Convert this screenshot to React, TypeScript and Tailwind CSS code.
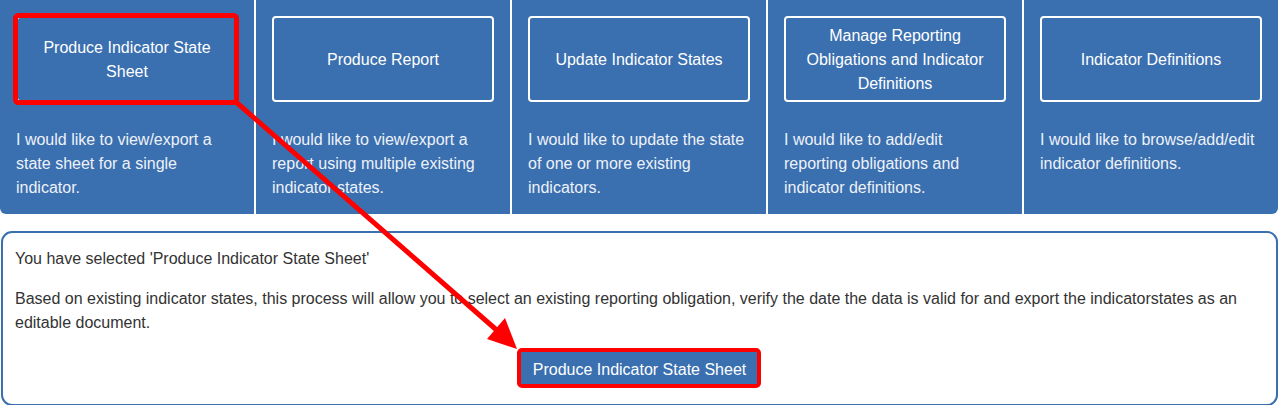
import React from "react";

const tasks = [
  {
    title: "Produce Indicator State Sheet",
    desc: "I would like to view/export a state sheet for a single indicator.",
  },
  {
    title: "Produce Report",
    desc: "I would like to view/export a report using multiple existing indicator states.",
  },
  {
    title: "Update Indicator States",
    desc: "I would like to update the state of one or more existing indicators.",
  },
  {
    title: "Manage Reporting Obligations and Indicator Definitions",
    desc: "I would like to add/edit reporting obligations and indicator definitions.",
  },
  {
    title: "Indicator Definitions",
    desc: "I would like to browse/add/edit indicator definitions.",
  },
];

function Annotations() {
  // red callout drawn over the screenshot
  return (
    <svg
      className="pointer-events-none absolute left-0 top-0"
      width={1278}
      height={405}
      viewBox="0 0 1278 405"
    >
      <rect x={15.5} y={15.5} width={221} height={87} rx={3} fill="none" stroke="#ff0000" strokeWidth={5} />
      <line x1={236} y1={102} x2={500} y2={333} stroke="#ff0000" strokeWidth={5} />
      <polygon points="517,349 487,339 505,318" fill="#ff0000" />
      <rect x={519} y={350} width={240} height={36} rx={3} fill="none" stroke="#ff0000" strokeWidth={4} />
    </svg>
  );
}

export default function App() {
  return (
    <div className="relative h-[405px] w-[1278px] overflow-hidden bg-white font-['Liberation_Sans',Arial,sans-serif] text-base leading-6">
      <div className="grid h-[214px] grid-cols-5 gap-[2px] overflow-hidden rounded-b-[6px]">
        {tasks.map((t) => (
          <div key={t.title} className="flex flex-col bg-[#3a6fb0] px-4 pt-[16px]">
            <button className="flex h-[86px] items-center justify-center rounded-[4px] border-2 border-white px-3 pt-[2px] text-center text-white">
              {t.title}
            </button>
            <p className="mt-[26px] text-[#eef2f8]">{t.desc}</p>
          </div>
        ))}
      </div>

      <div className="ml-[1px] mt-[17px] h-[175px] rounded-[11px] border-2 border-[#3a6fb0] px-3 pt-[14px] text-[#333333]">
        <p>You have selected 'Produce Indicator State Sheet'</p>
        <p className="mt-4">
          Based on existing indicator states, this process will allow you to select an existing reporting obligation,
          verify the date the data is valid for and export the indicatorstates as an editable document.
        </p>
        <div className="mt-[17px] flex justify-center">
          <button className="bg-[#3a6fb0] px-3 pb-[2px] pt-[6px] text-white">Produce Indicator State Sheet</button>
        </div>
      </div>

      <Annotations />
    </div>
  );
}
